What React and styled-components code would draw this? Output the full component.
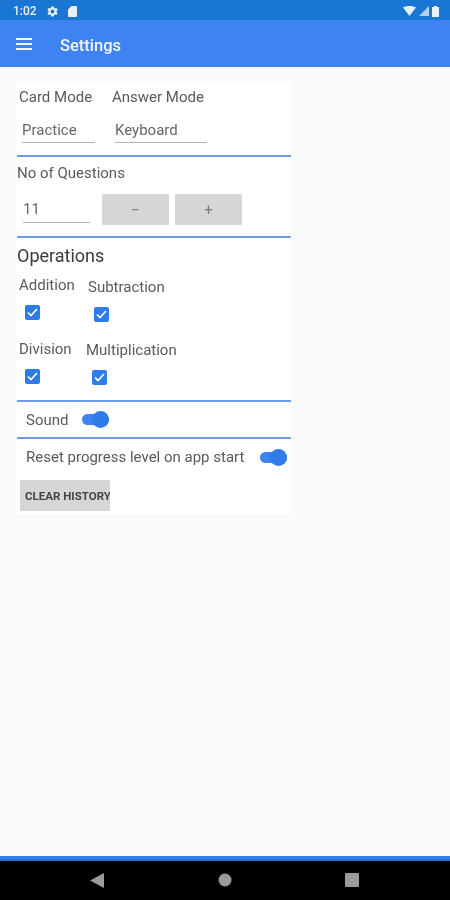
import React from 'react'
import styled, {createGlobalStyle} from 'styled-components'

const GlobalStyle = createGlobalStyle`
    html, body {
        margin: 0;
        padding: 0;
        background: #fafafa;
    }
    #root {
        filter: blur(0.55px);
    }
    * {
        box-sizing: border-box;
    }
`

const Screen = styled.div`
    width: 450px;
    height: 900px;
    display: flex;
    flex-direction: column;
    background: #fafafa;
    font-family: Roboto, "Liberation Sans", sans-serif;
    color: #555;
    overflow: hidden;
`
const StatusBar = styled.div`
    height: 20px;
    flex: none;
    display: flex;
    align-items: center;
    justify-content: space-between;
    padding: 2px 11px 0 13px;
    background: #1976d2;
    color: #e8f1fb;
`
const StatusGroup = styled.div`
    display: flex;
    align-items: center;
    gap: ${p => p.$gap}px;
`
const Clock = styled.span`
    font-size: 12px;
    font-weight: 500;
`
const Header = styled.header`
    height: 47px;
    flex: none;
    display: flex;
    align-items: center;
    gap: 28px;
    padding: 0 16px;
    background: #3f82f2;
    color: #f2f6fe;
`
const Title = styled.h1`
    margin: 3px 0 0;
    font-size: 16.5px;
    font-weight: 500;
`
const Content = styled.main`
    flex: 1;
    padding: 16px 0 0 16px;
`
const Card = styled.section`
    width: 275px;
    height: 431px;
    background: #fff;
    padding-left: 1px;
`
const Divider = styled.div`
    height: 2px;
    background: #6f9be8;
`
const ModeSection = styled.div`
    height: 72px;
    display: grid;
    grid-template-columns: 93px 1fr;
    grid-template-rows: 24px 48px;
    padding-left: 2px;
`
const Label = styled.span`
    font-size: 15px;
    line-height: 20px;
    color: #5a5a5a;
    white-space: nowrap;
`
const ModeLabel = styled(Label)`
    align-self: end;
`
const Field = styled.div`
    width: ${p => p.$width}px;
    height: 28px;
    margin-left: 3px;
    margin-top: 8px;
    padding-top: 2px;
    border-bottom: 1px solid #b4b4b4;
    font-size: 15px;
    line-height: 26px;
    color: #666;
`
const QuestionSection = styled.div`
    height: 79px;
    padding-top: 6px;
`
const StepperRow = styled.div`
    display: flex;
    align-items: flex-start;
    gap: 6px;
    margin-top: 11px;
    padding-left: 5px;
`
const CountField = styled(Field)`
    margin: 0 6px 0 1px;
    height: 29px;
    padding-top: 0;
    line-height: 30px;
`
const StepButton = styled.button`
    width: 67px;
    height: 31px;
    border: 0;
    border-radius: 1px;
    padding: 0;
    background: #d6d6d6;
    color: #777;
    font-family: inherit;
    font-size: 15px;
`
const OperationsSection = styled.div`
    height: 162px;
    padding-top: 7px;
`
const SectionTitle = styled.h2`
    margin: 0 0 8px;
    font-size: 18px;
    font-weight: 400;
    line-height: 22px;
    color: #3a3a3a;
`
const OperationGrid = styled.div`
    display: grid;
    grid-template-rows: 64px 64px;
    padding-left: 2px;
`
const OperationRow = styled.div`
    display: flex;
    align-items: flex-start;
`
const Operation = styled.div`
    width: ${p => p.$width}px;
    display: flex;
    flex-direction: column;
    align-items: flex-start;
    padding-top: ${p => p.$top || 0}px;
`
const Check = styled.span`
    width: 15px;
    height: 15px;
    margin: 10px 0 0 6px;
    border-radius: 2px;
    background: #2f7bea;
    display: flex;
    align-items: center;
    justify-content: center;
`
const SoundRow = styled.div`
    height: 35px;
    display: flex;
    align-items: center;
    gap: 14px;
    padding-left: 9px;
`
const ResetRow = styled.div`
    height: 36px;
    display: flex;
    align-items: center;
    justify-content: space-between;
    padding: 0 4px 0 9px;
`
const Switch = styled.span`
    position: relative;
    width: 27px;
    height: 11px;
    flex: none;
    border-radius: 6px;
    background: #3f82f2;
    &::after {
        content: "";
        position: absolute;
        right: 0;
        top: -3px;
        width: 17px;
        height: 17px;
        border-radius: 50%;
        background: #2f7bea;
    }
`
const ClearButton = styled.button`
    display: block;
    width: 90px;
    height: 31px;
    margin: 5px 0 0 3px;
    border: 0;
    border-radius: 1px;
    padding: 0 0 0 5px;
    background: #d6d6d6;
    color: #444;
    font-family: inherit;
    font-size: 11.5px;
    font-weight: 700;
    text-align: left;
    white-space: nowrap;
    overflow: hidden;
`
const AccentBar = styled.div`
    height: 5px;
    flex: none;
    background: linear-gradient(#2f80e8 60%, #1b5fae);
`
const NavBar = styled.nav`
    height: 39px;
    flex: none;
    display: flex;
    align-items: flex-start;
    background: #000;
`
const NavSlot = styled.div`
    position: relative;
    left: ${p => p.$shift}px;
    margin-top: 12px;
    flex: 1;
    display: flex;
    justify-content: center;
`

const Menu = () => (
    <svg width="16" height="12" viewBox="0 0 16 12" fill="currentColor">
        <rect y="0" width="16" height="2" />
        <rect y="5" width="16" height="2" />
        <rect y="10" width="16" height="2" />
    </svg>
)

const Gear = () => (
    <svg width="13" height="13" viewBox="0 0 24 24" fill="currentColor">
        <path d="M19.4 13a7.5 7.5 0 0 0 0-2l2.2-1.7-2.2-3.7-2.6 1a7.6 7.6 0 0 0-1.700-1L14.500 2.900h-5L9.100 5.600a7.600 7.600 0 0 0-1.700 1l-2.600-1-2.200 3.700L4.800 11a7.500 7.500 0 0 0 0 2l-2.200 1.700 2.200 3.700 2.600-1c.5.400 1.100.700 1.700 1l.4 2.700h5l.4-2.700c.6-.3 1.200-.6 1.700-1l2.600 1 2.200-3.700zM12 15.500a3.500 3.500 0 1 1 0-7 3.500 3.500 0 0 1 0 7z" />
    </svg>
)

const SdCard = () => (
    <svg width="9" height="11" viewBox="0 0 9 11" fill="currentColor">
        <path d="M3.500 0H8a1 1 0 0 1 1 1v9a1 1 0 0 1-1 1H1a1 1 0 0 1-1-1V3.500z" />
    </svg>
)

const Wifi = () => (
    <svg width="13" height="10" viewBox="0 0 13 10" fill="currentColor">
        <path d="M0 1.500C4-.5 9-.5 13 1.500L6.500 10z" />
    </svg>
)

const Signal = () => (
    <svg width="10" height="10" viewBox="0 0 10 10" fill="currentColor" opacity="0.75">
        <path d="M10 0v10H0z" />
    </svg>
)

const Battery = () => (
    <svg width="7" height="11" viewBox="0 0 7 11" fill="currentColor">
        <path d="M2 0h3v1h2v10H0V1h2z" />
    </svg>
)

const Tick = () => (
    <svg width="11" height="9" viewBox="0 0 11 9" fill="none" stroke="#fff" strokeWidth="1.700">
        <path d="M1 4.500l3 3 6-6.500" />
    </svg>
)

const Back = () => (
    <svg width="14" height="15" viewBox="0 0 14 15" fill="#9a9a9a">
        <path d="M14 0v15L0 7.500z" />
    </svg>
)

const Home = () => (
    <svg width="14" height="14" viewBox="0 0 14 14" fill="#9a9a9a">
        <circle cx="7" cy="7" r="6.500" />
    </svg>
)

const Recent = () => (
    <svg width="14" height="14" viewBox="0 0 14 14" fill="#9a9a9a">
        <rect width="14" height="14" rx="1" />
    </svg>
)

const App = () => {
    return (<>
        <GlobalStyle />
        <Screen>
            <StatusBar>
                <StatusGroup $gap={9}>
                    <Clock>1:02</Clock>
                    <Gear />
                    <SdCard />
                </StatusGroup>
                <StatusGroup $gap={3}>
                    <Wifi />
                    <Signal />
                    <Battery />
                </StatusGroup>
            </StatusBar>
            <Header>
                <Menu />
                <Title>Settings</Title>
            </Header>
            <Content>
                <Card>
                    <ModeSection>
                        <ModeLabel>Card Mode</ModeLabel>
                        <ModeLabel>Answer Mode</ModeLabel>
                        <Field $width={73}>Practice</Field>
                        <Field $width={92}>Keyboard</Field>
                    </ModeSection>
                    <Divider />
                    <QuestionSection>
                        <Label>No of Questions</Label>
                        <StepperRow>
                            <CountField $width={67}>11</CountField>
                            <StepButton>−</StepButton>
                            <StepButton>+</StepButton>
                        </StepperRow>
                    </QuestionSection>
                    <Divider />
                    <OperationsSection>
                        <SectionTitle>Operations</SectionTitle>
                        <OperationGrid>
                            <OperationRow>
                                <Operation $width={69}>
                                    <Label>Addition</Label>
                                    <Check><Tick /></Check>
                                </Operation>
                                <Operation $width={100} $top={2}>
                                    <Label>Subtraction</Label>
                                    <Check><Tick /></Check>
                                </Operation>
                            </OperationRow>
                            <OperationRow>
                                <Operation $width={67}>
                                    <Label>Division</Label>
                                    <Check><Tick /></Check>
                                </Operation>
                                <Operation $width={100} $top={1}>
                                    <Label>Multiplication</Label>
                                    <Check><Tick /></Check>
                                </Operation>
                            </OperationRow>
                        </OperationGrid>
                    </OperationsSection>
                    <Divider />
                    <SoundRow>
                        <Label>Sound</Label>
                        <Switch />
                    </SoundRow>
                    <Divider />
                    <ResetRow>
                        <Label>Reset progress level on app start</Label>
                        <Switch />
                    </ResetRow>
                    <ClearButton>CLEAR HISTORY</ClearButton>
                </Card>
            </Content>
            <AccentBar />
            <NavBar>
                <NavSlot $shift={22}><Back /></NavSlot>
                <NavSlot $shift={0}><Home /></NavSlot>
                <NavSlot $shift={-23}><Recent /></NavSlot>
            </NavBar>
        </Screen>
    </>)
}

export default App
